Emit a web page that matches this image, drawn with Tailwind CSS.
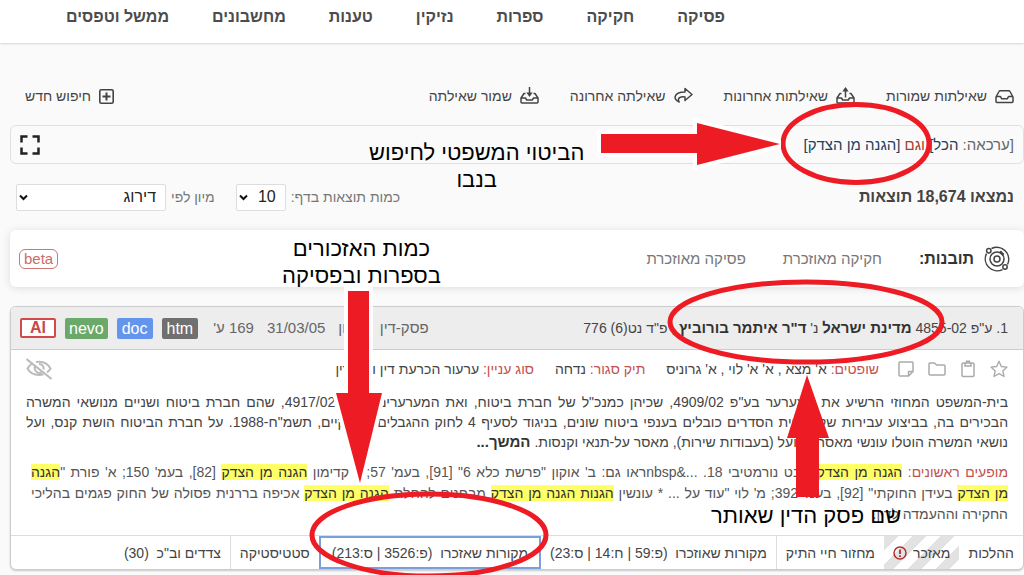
<!DOCTYPE html>
<html lang="he" dir="rtl">

<head>
    <meta charset="UTF-8">
    <meta name="viewport" content="width=device-width, initial-scale=1.0">
    <title>נבו - תוצאות חיפוש</title>
    <script src="https://cdn.jsdelivr.net/npm/@tailwindcss/browser@4"></script>
</head>

<body class="relative h-screen overflow-hidden bg-[#fafafa] font-['Liberation_Sans',sans-serif] text-sm text-[#444]">

    <!-- Main navigation -->
    <header class="h-[43px] bg-white shadow-[0_1px_2px_rgba(0,0,0,0.15)]">
        <nav class="flex gap-[43px] pt-[5px] pr-[299px] text-base leading-6 font-bold whitespace-nowrap text-[#4c4c4c]">
            <a href="#">פסיקה</a>
            <a href="#">חקיקה</a>
            <a href="#">ספרות</a>
            <a href="#">נזיקין</a>
            <a href="#">טענות</a>
            <a href="#">מחשבונים</a>
            <a href="#">ממשל וטפסים</a>
        </nav>
    </header>

    <main class="pl-[10px]">
        <!-- Query actions -->
        <div class="flex items-center gap-[31px] pt-[41px] pr-[10px] pl-[15px] leading-6 whitespace-nowrap">
            <button class="flex items-center gap-2">
                <svg class="h-5 w-[19px]" viewBox="0 0 19 20" fill="none" stroke="currentColor" stroke-width="1.500" stroke-linejoin="round"><path d="M1 11 4 5.500q.4-.8 1.200-.8h8.600q.8 0 1.200.8l3 5.500v4.500q0 1-1 1H2q-1 0-1-1zM1 10.500h4.500l1.200 2.300h5.600l1.200-2.300H18" /></svg>
                שאילתות שמורות
            </button>
            <button class="flex items-center gap-2">
                <svg class="h-5 w-[19px]" viewBox="0 0 19 20" fill="none" stroke="currentColor" stroke-width="1.500" stroke-linejoin="round"><path d="M5.500 7.500H4L1 12v4q0 1 1 1h15q1 0 1-1v-4l-3-4.500h-1.500M1 12h4.500l1.200 2h5.600l1.200-2H18M9.500 11.500V2.500" /><path d="M6.300 5.500 9.500 1l3.200 4.500z" fill="currentColor" stroke="none" /></svg>
                שאילתות אחרונות
            </button>
            <button class="flex items-center gap-2">
                <svg class="h-5 w-[19px]" viewBox="0 0 19 20" fill="none" stroke="currentColor" stroke-width="1.500" stroke-linejoin="round"><path d="M11 2.500 18 8.500l-7 6v-3.600C7.500 10.500 5 11.500 4.500 13q-.3 1.500.7 3C2 14.500 .7 12.500 1.200 10.500 2 7.500 6 6 11 6z" /></svg>
                שאילתה אחרונה
            </button>
            <button class="flex items-center gap-2">
                <svg class="h-5 w-[19px]" viewBox="0 0 19 20" fill="none" stroke="currentColor" stroke-width="1.500" stroke-linejoin="round"><path d="M5.500 7.500H4L1 12v4q0 1 1 1h15q1 0 1-1v-4l-3-4.500h-1.500M1 12h4.500l1.200 2h5.600l1.200-2H18M9.500 1v7" /><path d="M6.300 6.500 9.500 11l3.200-4.500z" fill="currentColor" stroke="none" /></svg>
                שמור שאילתה
            </button>
            <button class="mr-auto flex items-center gap-2">
                <svg class="size-[15px]" viewBox="0 0 15 15" fill="none" stroke="currentColor"><rect x=".8" y=".8" width="13.400" height="13.400" rx="1.500" stroke-width="1.600" /><path d="M7.500 3.500v8M3.500 7.500h8" stroke-width="2" /></svg>
                חיפוש חדש
            </button>
        </div>

        <!-- Current query -->
        <div class="mt-[17px] flex h-[39px] items-center justify-between rounded-md border border-[#e0e0e0] pr-[9px] pl-[9px]">
            <p class="text-[15px] text-[#666]">[ערכאה: <span class="text-[#23405f]">הכל]</span> <span class="text-[#a5402f]">וגם</span> <span class="text-[#23405f]">[הגנה מן הצדק]</span></p>
            <button aria-label="מסך מלא">
                <svg class="size-5" viewBox="0 0 20 20" fill="none" stroke="#222" stroke-width="2.500"><path d="M1.500 7.500v-6h6M12.500 1.500h6v6M18.500 12.500v6h-6M7.500 18.500h-6v-6" /></svg>
            </button>
        </div>

        <!-- Result count, page size and sorting -->
        <div class="flex h-[66px] items-center pr-[10px] pl-[6px]">
            <h1 class="text-base font-bold">נמצאו 18,674 תוצאות</h1>
            <div class="mr-auto flex items-center text-[#777]">
                <label for="pageSize">כמות תוצאות בדף:</label>
                <div class="relative mr-[5px]">
                    <select id="pageSize" class="h-[27px] w-[50px] appearance-none rounded-xs border border-[#ddd] bg-white pr-[9px] text-base leading-5 text-[#222]">
                        <option>10</option>
                    </select>
                    <svg class="pointer-events-none absolute top-[10px] left-[3px] h-[7px] w-[9px]" viewBox="0 0 9 7" fill="none" stroke="#111" stroke-width="2"><path d="m1 1.500 3.500 3.500L8 1.500" /></svg>
                </div>
                <label for="sortBy" class="mr-[21px]">מיון לפי</label>
                <div class="relative mr-[5px]">
                    <select id="sortBy" class="h-[27px] w-[150px] appearance-none rounded-xs border border-[#ddd] bg-white pr-[9px] text-base leading-5 text-[#222]">
                        <option>דירוג</option>
                    </select>
                    <svg class="pointer-events-none absolute top-[10px] left-[3px] h-[7px] w-[9px]" viewBox="0 0 9 7" fill="none" stroke="#111" stroke-width="2"><path d="m1 1.500 3.500 3.500L8 1.500" /></svg>
                </div>
            </div>
        </div>

        <!-- Insights -->
        <section class="flex h-[57px] items-center rounded-md bg-white pr-[14px] pl-[9px] text-[15px] shadow-[0_1px_8px_rgba(0,0,0,0.12)]">
            <svg class="size-[26px]" viewBox="0 0 26 26" fill="none" stroke="#444" stroke-width="1.500"><circle cx="13" cy="13" r="3" /><circle cx="13" cy="13" r="7" /><path d="M7.500 2.500a12 12 0 0 1 16 16M18.500 23.600a12 12 0 0 1-16-16" /><circle cx="4.800" cy="4.800" r="2.200" /><circle cx="21" cy="21" r="2.200" /><path d="M16 5.500 19.500 9" stroke-width="2.500" /></svg>
            <h2 class="mr-[10px] text-base font-bold text-[#333]">תובנות:</h2>
            <a href="#" class="mr-[37px] text-[#777]">חקיקה מאוזכרת</a>
            <a href="#" class="mr-[37px] text-[#777]">פסיקה מאוזכרת</a>
            <span class="mr-auto rounded-md border border-[#cf7772] px-1 leading-[18px] text-[#cf6a65]">beta</span>
        </section>

        <!-- Search result -->
        <article class="mt-[19px] rounded-md border border-[#ccc] bg-white shadow-[0_1px_2px_rgba(0,0,0,0.2)]">
            <div class="flex h-[43px] items-center rounded-t-md border-b border-[#ccc] bg-[#ededed] pr-[15px] pl-[9px] whitespace-nowrap">
                <h3>1. ע"פ 4855-02 <b class="text-[15px] text-[#333]">מדינת ישראל</b> נ' <b class="text-[15px] text-[#333]">ד"ר איתמר בורוביץ</b> , פ"ד נט(6) 776</h3>
                <div class="mr-auto flex items-center gap-[13px] text-[15px] text-[#666]">
                    <span>פסק-דין</span>
                    <span>עליון</span>
                    <span>31/03/05</span>
                    <span>169 ע'</span>
                </div>
                <div class="mr-[15px] flex items-center gap-[9px] text-base leading-[21px] text-white">
                    <a href="#" class="rounded-xs bg-[#707070] px-[5px]">htm</a>
                    <a href="#" class="rounded-xs bg-[#6495ed] px-[5px]">doc</a>
                    <a href="#" class="rounded-xs bg-[#6aa96a] px-1">nevo</a>
                    <a href="#" class="rounded-xs border-2 border-[#d04a48] bg-white px-2 leading-4 font-bold text-[#c64a48]">AI</a>
                </div>
            </div>

            <div class="flex h-[38px] items-center pr-[15px] pl-[15px] whitespace-nowrap">
                <div class="flex items-center gap-[13px] text-[#aaa]">
                    <button aria-label="מועדפים"><svg class="block size-[18px]" viewBox="0 0 18 18" fill="none" stroke="currentColor" stroke-width="1.400" stroke-linejoin="round"><path d="m9 1.300 2.300 5.200 5.700.6-4.200 3.800 1.200 5.600L9 13.600l-5 2.900 1.200-5.600L1 7.100l5.700-.6z" /></svg></button>
                    <button aria-label="העתקה"><svg class="block size-[18px]" viewBox="0 0 18 18" fill="none" stroke="currentColor" stroke-width="1.500"><rect x="3" y="3" width="12" height="13.500" rx="1" /><path d="M6 3v3h6V3M7.500 3V1.300h3V3" /></svg></button>
                    <button aria-label="תיקייה"><svg class="block size-[18px]" viewBox="0 0 18 18" fill="none" stroke="currentColor" stroke-width="1.500" stroke-linejoin="round"><path d="M1 4q0-1 1-1h4.500l2 2H16q1 0 1 1v8q0 1-1 1H2q-1 0-1-1z" /></svg></button>
                    <button aria-label="הערה"><svg class="block size-[18px]" viewBox="0 0 18 18" fill="none" stroke="currentColor" stroke-width="1.500" stroke-linejoin="round"><path d="M2 3q0-1 1-1h12q1 0 1 1v8.500L11.500 16H3q-1 0-1-1zM16 11.500h-4.500V16" /></svg></button>
                </div>
                <p class="mr-[18px]"><span class="text-[#c4514c]">שופטים:</span> א' מצא , א' א' לוי , א' גרוניס</p>
                <p class="mr-[21px]"><span class="text-[#c4514c]">תיק סגור:</span> נדחה</p>
                <p class="mr-[21px]"><span class="text-[#c4514c]">סוג עניין:</span> ערעור הכרעת דין וגזר דין</p>
                <button class="mr-auto text-[#bbb]" aria-label="הסתרה"><svg class="block h-[22px] w-[26px]" viewBox="0 0 26 22" fill="none" stroke="currentColor" stroke-width="2"><path d="M7 5Q3.500 7 1.500 10.500 5 17 13 17q2.500 0 4.500-.7M10 4q10-1.500 14.500 6.500-1.300 2.500-3.500 4M9 8a5 5 0 0 0 6.500 6.500M13 6a4.500 4.500 0 0 1 4.500 5.500M.5 1l25 20" /></svg></button>
            </div>

            <p class="pt-1 pr-[15px] pl-[15px] text-justify leading-5">
                בית-המשפט המחוזי הרשיע את המערער בע"פ 4909/02, שכיהן כמנכ"ל של חברת ביטוח, ואת המערערים בע"פ 4917/02, שהם חברת ביטוח ושניים מנושאי המשרה
                הבכירים בה, בביצוע עבירות של עשיית הסדרים כובלים בענפי ביטוח שונים, בניגוד לסעיף 4 לחוק ההגבלים העסקיים, תשמ"ח-1988. על חברת הביטוח הושת קנס, ועל
                נושאי המשרה הוטלו עונשי מאסר בפועל (בעבודות שירות), מאסר על-תנאי וקנסות. <b class="text-[15px] text-[#333]">המשך...</b>
            </p>

            <p class="pt-[10px] pr-[15px] pl-[20px] text-justify leading-[21px] text-[#555]">
                <span class="text-[#c4514c]">מופעים ראשונים:</span> <mark class="bg-[#ffff66] text-[#333]">הגנה מן הצדק</mark> מבט נורמטיבי 18. ...&amp;nbspראו גם: ב' אוקון "פרשת כלא 6" [91], בעמ' 57; י' קדימון <mark class="bg-[#ffff66] text-[#333]">הגנה מן הצדק</mark> [82], בעמ' 150; א' פורת "<mark class="bg-[#ffff66] text-[#333]">הגנה
                מן&nbsp;הצדק</mark> בעידן החוקתי" [92], בעמ' 392; מ' לוי "עוד על ... * עונשין <mark class="bg-[#ffff66] text-[#333]">הגנות הגנה מן הצדק</mark> מבחנים להחלת <mark class="bg-[#ffff66] text-[#333]">הגנה מן הצדק</mark> אכיפה בררנית פסולה של החוק פגמים בהליכי
                החקירה וההעמדה לדין.
            </p>

            <div class="mt-[10px] flex h-[34px] border-t border-[#ddd] whitespace-nowrap">
                <button class="px-[9px]">ההלכות</button>
                <button class="flex items-center gap-[6px] bg-[repeating-linear-gradient(135deg,#e2e2e2_0_10px,#fff_10px_20px)] px-[9px]">
                    מאזכר
                    <svg class="size-[14px]" viewBox="0 0 14 14" fill="none" stroke="#b03030" stroke-width="1.500"><circle cx="7" cy="7" r="6" /><path d="M7 3.500v4.500M7 9.300v1.700" stroke-width="1.800" /></svg>
                </button>
                <button class="border-l border-[#ddd] px-[9px]">מחזור חיי התיק</button>
                <button class="px-[9px]">מקורות שאוזכרו &nbsp;(פ:59 | ח:14 | ס:23)</button>
                <button class="border-2 border-[#7a9fdc] px-[11px]">מקורות שאזכרו &nbsp;(פ:3526 | ס:213)</button>
                <button class="border-l border-[#ddd] px-[9px]">סטטיסטיקה</button>
                <button class="px-[9px]">צדדים וב"כ &nbsp;(30)</button>
            </div>
        </article>
    </main>

    <!-- Guide marks laid over the page -->
    <svg class="pointer-events-none absolute top-0 left-0 h-[575px] w-[1024px]" viewBox="0 0 1024 575" fill="none">
        <g stroke="#ed1c24" stroke-width="5">
            <ellipse cx="856" cy="143.500" rx="73" ry="39" />
            <ellipse cx="806" cy="322" rx="136" ry="40" />
            <ellipse cx="429" cy="535" rx="117" ry="41" />
        </g>
        <g fill="#ed1c24" stroke="#fff" stroke-width="8" paint-order="stroke">
            <path d="M601 134h96v-11l83 21-83 21v-12h-96z" />
            <path d="M348 291h21v102h13l-22 90-24-90h12z" />
            <path d="M807 375l22 63h-10v59h-23v-59h-9z" stroke="none" />
        </g>
    </svg>
    <p class="absolute top-[139px] left-[369px] text-center text-[22px] leading-[27px] whitespace-nowrap text-black">הביטוי המשפטי לחיפוש<br>בנבו</p>
    <p class="absolute top-[235px] left-[282px] text-center text-[22px] leading-[27px] whitespace-nowrap text-black">כמות האזכורים<br>בספרות ובפסיקה</p>
    <p class="absolute top-[502px] left-[711px] text-[22px] leading-[27px] whitespace-nowrap text-black">שם פסק הדין שאותר</p>
</body>

</html>
